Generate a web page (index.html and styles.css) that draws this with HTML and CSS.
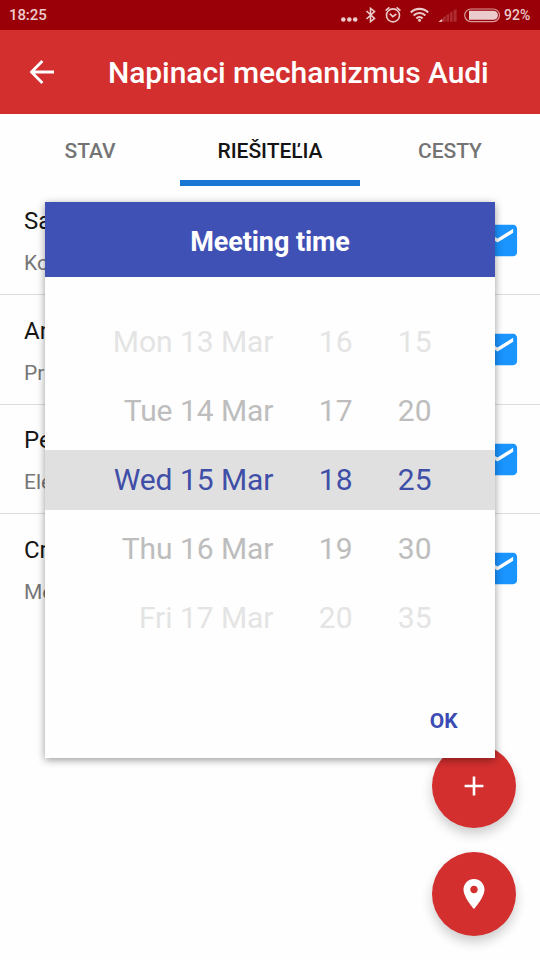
FILE: index.html
```html
<!DOCTYPE html>
<html lang="sk">
<head>
<meta charset="utf-8">
<title>Napinaci mechanizmus Audi</title>
<link rel="stylesheet" href="styles.css">
</head>
<body>
<svg class="defs" aria-hidden="true">
  <symbol id="mail" viewBox="0 0 24 24"><path d="M20 4H4c-1.1 0-2 .9-2 2v12c0 1.1.9 2 2 2h16c1.1 0 2-.9 2-2V6c0-1.1-.9-2-2-2zm0 4l-8 5-8-5V6l8 5 8-5v2z"/></symbol>
</svg>
<div class="screen">
  <div class="status">
    <span class="clock">18:25</span>
    <svg class="status-icons" viewBox="0 0 162 30" width="162" height="30">
      <g fill="#ebcccd">
        <circle cx="3.3" cy="19.5" r="2.3"/><circle cx="9.3" cy="19.5" r="2.3"/><circle cx="15.2" cy="19.5" r="2.3"/>
      </g>
      <path d="M26.5 11l8 7.5-4 3.2V8.3l4 3.2-8 7.5" fill="none" stroke="#ebcccd" stroke-width="1.6"/>
      <g fill="none" stroke="#ebcccd" stroke-width="1.6">
        <circle cx="53" cy="15.4" r="6.5"/><path d="M49.8 13.6l3 3 3.6-2.6M45.6 10.6l3.8-3.2M60.4 10.6l-3.8-3.2"/>
      </g>
      <g fill="none" stroke="#ebcccd" stroke-width="2.1">
        <path d="M70.8 12.4a12.4 12.4 0 0 1 17.4 0M73.6 15.5a8.3 8.3 0 0 1 11.8 0M76.4 18.4a4.4 4.4 0 0 1 6.2 0"/>
      </g>
      <circle cx="79.5" cy="20.2" r="1.5" fill="#ebcccd"/>
      <path d="M98.3 21.7l4-2.6v2.6z" fill="#f5dada"/>
      <path d="M103 21.7v-4.4l2.6-1.5v5.9zM106.4 21.7v-6.7l2.6-1.6v8.3zM109.9 21.7v-8.9l2.7-1.6v10.5zM113.6 21.7V10.6l3-1.8v12.9z" fill="#b13b3e" fill-opacity=".75"/>
      <rect x="124.7" y="9" width="34.8" height="12.6" rx="6.3" fill="none" stroke="#d99a9b" stroke-width="1.2"/>
      <path d="M129 10.8h24.5a4.4 4.4 0 0 1 0 8.9H129z" fill="#ebcccd"/>
    </svg>
    <span class="battery">92%</span>
  </div>
  <header class="toolbar">
    <svg class="back" viewBox="0 0 24 24" width="24" height="24"><path d="M24 12H1.8M12.4 1L1.5 12l10.9 11" fill="none" stroke="#fff" stroke-width="2.8"/></svg>
    <h1 class="title">Napinaci mechanizmus Audi</h1>
  </header>
  <nav class="tabs">
    <span class="tab">STAV</span>
    <span class="tab active">RIEŠITEĽIA</span>
    <span class="tab">CESTY</span>
  </nav>
  <main class="list">
    <div class="row"><div><div class="name">Sa</div><div class="role">Ko</div></div><svg class="mail"><use href="#mail"/></svg></div>
    <div class="row"><div><div class="name">An</div><div class="role">Pr</div></div><svg class="mail"><use href="#mail"/></svg></div>
    <div class="row"><div><div class="name">Pe</div><div class="role">Ele</div></div><svg class="mail"><use href="#mail"/></svg></div>
    <div class="row"><div><div class="name">Cr</div><div class="role">Me</div></div><svg class="mail"><use href="#mail"/></svg></div>
  </main>
  <div class="fabs">
    <div class="fab"><svg viewBox="0 0 20 20" width="20" height="20"><path d="M10 .6v18.8M.6 10h18.8" stroke="#fff" stroke-width="2.6"/></svg></div>
    <div class="fab"><svg viewBox="0 0 24 24" width="36" height="36"><path fill="#fff" d="M12 2C8.13 2 5 5.13 5 9c0 5.25 7 13 7 13s7-7.75 7-13c0-3.87-3.13-7-7-7zm0 9.5c-1.38 0-2.5-1.12-2.5-2.5s1.12-2.5 2.5-2.5 2.5 1.12 2.5 2.5-1.12 2.5-2.5 2.5z"/></svg></div>
  </div>
  <section class="dialog">
    <h2 class="dialog-title">Meeting time</h2>
    <div class="picker">
      <div class="option far"><span>Mon 13 Mar</span><span>16</span><span>15</span></div>
      <div class="option"><span>Tue 14 Mar</span><span>17</span><span>20</span></div>
      <div class="option selected"><span>Wed 15 Mar</span><span>18</span><span>25</span></div>
      <div class="option"><span>Thu 16 Mar</span><span>19</span><span>30</span></div>
      <div class="option far"><span>Fri 17 Mar</span><span>20</span><span>35</span></div>
    </div>
    <div class="actions"><span class="ok">OK</span></div>
  </section>
</div>
</body>
</html>
```
FILE: styles.css
```css
* { box-sizing: border-box; }
body { margin: 0; font-family: Roboto, "Noto Sans", sans-serif; background: #fefefe; }
.defs { position: absolute; width: 0; height: 0; }
.screen { position: relative; width: 540px; height: 960px; overflow: hidden; background: #fefefe; }
.status { display: flex; align-items: center; height: 30px; padding: 0 9px; background: #9a0007; color: #ebcccd; font-size: 15px; font-weight: 500; }
.clock { flex: 1; letter-spacing: -.1px; }
.status-icons { flex: none; margin-right: 2px; }
.battery { width: 27px; font-size: 14px; white-space: nowrap; }
.toolbar { display: flex; align-items: center; height: 84px; padding-left: 30px; background: #d32f2f; color: #fff; }
.back { flex: none; }
.title { margin: 2px 0 0 54px; font-size: 30px; font-weight: 500; line-height: 36px; letter-spacing: -.07px; white-space: nowrap; }
.tabs { display: grid; grid-template-columns: repeat(3, 1fr); height: 72px; }
.tab { display: flex; align-items: center; justify-content: center; padding-top: 7px; border-bottom: 6px solid transparent; font-size: 21px; font-weight: 500; letter-spacing: -.06px; color: #747474; }
.tab.active { color: #141414; border-color: #1976d2; }
.row { display: flex; align-items: center; justify-content: space-between; height: 109.6px; padding: 0 19px 0 24px; border-bottom: 1.5px solid #dcdcdc; }
.list { margin-top: -.6px; }
.row:last-child { border-bottom-color: transparent; }
.name { padding-top: 6px; font-size: 24px; line-height: 42px; color: #161616; }
.role { font-size: 21px; line-height: 43px; color: #777; }
.mail { width: 47px; height: 47px; margin-top: 1px; fill: #1a94ff; }
.fabs { position: absolute; left: 432px; top: 744px; display: flex; flex-direction: column; gap: 24px; }
.fab { display: flex; align-items: center; justify-content: center; width: 84px; height: 84px; border-radius: 50%; background: #d32f2f; box-shadow: 0 6px 12px rgba(0, 0, 0, .2); }
.dialog { position: absolute; left: 45px; top: 202.4px; width: 450px; height: 555.2px; background: #fefefe; box-shadow: 0 2px 8px rgba(0, 0, 0, .4); }
.dialog-title { display: flex; align-items: center; justify-content: center; height: 75px; margin: 0; padding-top: 4px; background: #3f51b5; color: #fff; font-size: 27px; font-weight: 700; letter-spacing: -.08px; }
.picker { padding-top: 34.6px; }
.option { display: grid; grid-template-columns: 228.5px 79px 79px; height: 60px; margin-bottom: 9px; align-items: center; font-size: 30px; letter-spacing: -.04px; color: #bdbdbd; text-align: right; white-space: nowrap; }
.option.far { color: #e4e4e4; }
.option.selected { background: #e0e0e0; color: #3f4fa8; }
.actions { display: flex; justify-content: flex-end; padding: 50px 37.5px 0 0; }
.ok { color: #3a4bb3; font-size: 21px; font-weight: 700; line-height: 28px; }
```
